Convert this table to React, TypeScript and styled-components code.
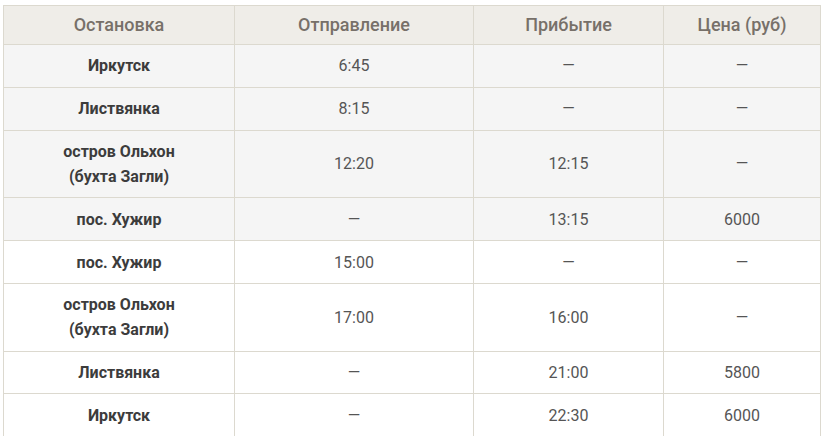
import React from 'react'
import styled, { createGlobalStyle } from 'styled-components'

interface Stop {
  name: string[]
  departure: string
  arrival: string
  price: string
  shaded: boolean
}

const stops: Stop[] = [
  { name: ['Иркутск'], departure: '6:45', arrival: '—', price: '—', shaded: true },
  { name: ['Листвянка'], departure: '8:15', arrival: '—', price: '—', shaded: true },
  { name: ['остров Ольхон', '(бухта Загли)'], departure: '12:20', arrival: '12:15', price: '—', shaded: true },
  { name: ['пос. Хужир'], departure: '—', arrival: '13:15', price: '6000', shaded: true },
  { name: ['пос. Хужир'], departure: '15:00', arrival: '—', price: '—', shaded: false },
  { name: ['остров Ольхон', '(бухта Загли)'], departure: '17:00', arrival: '16:00', price: '—', shaded: false },
  { name: ['Листвянка'], departure: '—', arrival: '21:00', price: '5800', shaded: false },
  { name: ['Иркутск'], departure: '—', arrival: '22:30', price: '6000', shaded: false }
]

const GlobalStyle = createGlobalStyle`
  body {
    margin: 0;
    background: #ffffff;
    font-family: Roboto, 'Liberation Sans', sans-serif;
  }
`

const Wrapper = styled.div`
  padding: 5px 0 0 3px;
`

const Schedule = styled.table`
  width: 817px;
  border-collapse: collapse;
  table-layout: fixed;
  border: 1px solid #dcd9cf;
`

const HeadCell = styled.th`
  background: #efede8;
  color: #777069;
  font-size: 18px;
  font-weight: 500;
  line-height: 24px;
  padding: 7px 8px;
  text-align: center;
  border: 1px solid #dcd9cf;
`

const Row = styled.tr<{ $shaded: boolean }>`
  background: ${(props): string => (props.$shaded ? '#f5f5f5' : '#ffffff')};
`

const NameCell = styled.td`
  color: #3c3c3c;
  font-size: 16px;
  font-weight: 700;
  line-height: 25px;
  padding: 8.4px 8px;
  text-align: center;
  border: 1px solid #dcd9cf;
`

const ValueCell = styled.td`
  color: #555555;
  font-size: 16px;
  font-weight: 400;
  line-height: 25px;
  padding: 8.4px 8px;
  text-align: center;
  border: 1px solid #dcd9cf;
`

const App: React.FC = () => {
  return (
    <Wrapper>
      <GlobalStyle />
      <Schedule>
        <colgroup>
          <col style={{ width: 231 }} />
          <col style={{ width: 239 }} />
          <col style={{ width: 190 }} />
          <col style={{ width: 157 }} />
        </colgroup>
        <thead>
          <tr>
            <HeadCell>Остановка</HeadCell>
            <HeadCell>Отправление</HeadCell>
            <HeadCell>Прибытие</HeadCell>
            <HeadCell>Цена (руб)</HeadCell>
          </tr>
        </thead>
        <tbody>
          {stops.map((stop, index) => (
            <Row key={index} $shaded={stop.shaded}>
              <NameCell>
                {stop.name.map((line, i) => (
                  <React.Fragment key={i}>
                    {i > 0 && <br />}
                    {line}
                  </React.Fragment>
                ))}
              </NameCell>
              <ValueCell>{stop.departure}</ValueCell>
              <ValueCell>{stop.arrival}</ValueCell>
              <ValueCell>{stop.price}</ValueCell>
            </Row>
          ))}
        </tbody>
      </Schedule>
    </Wrapper>
  )
}

export default App
